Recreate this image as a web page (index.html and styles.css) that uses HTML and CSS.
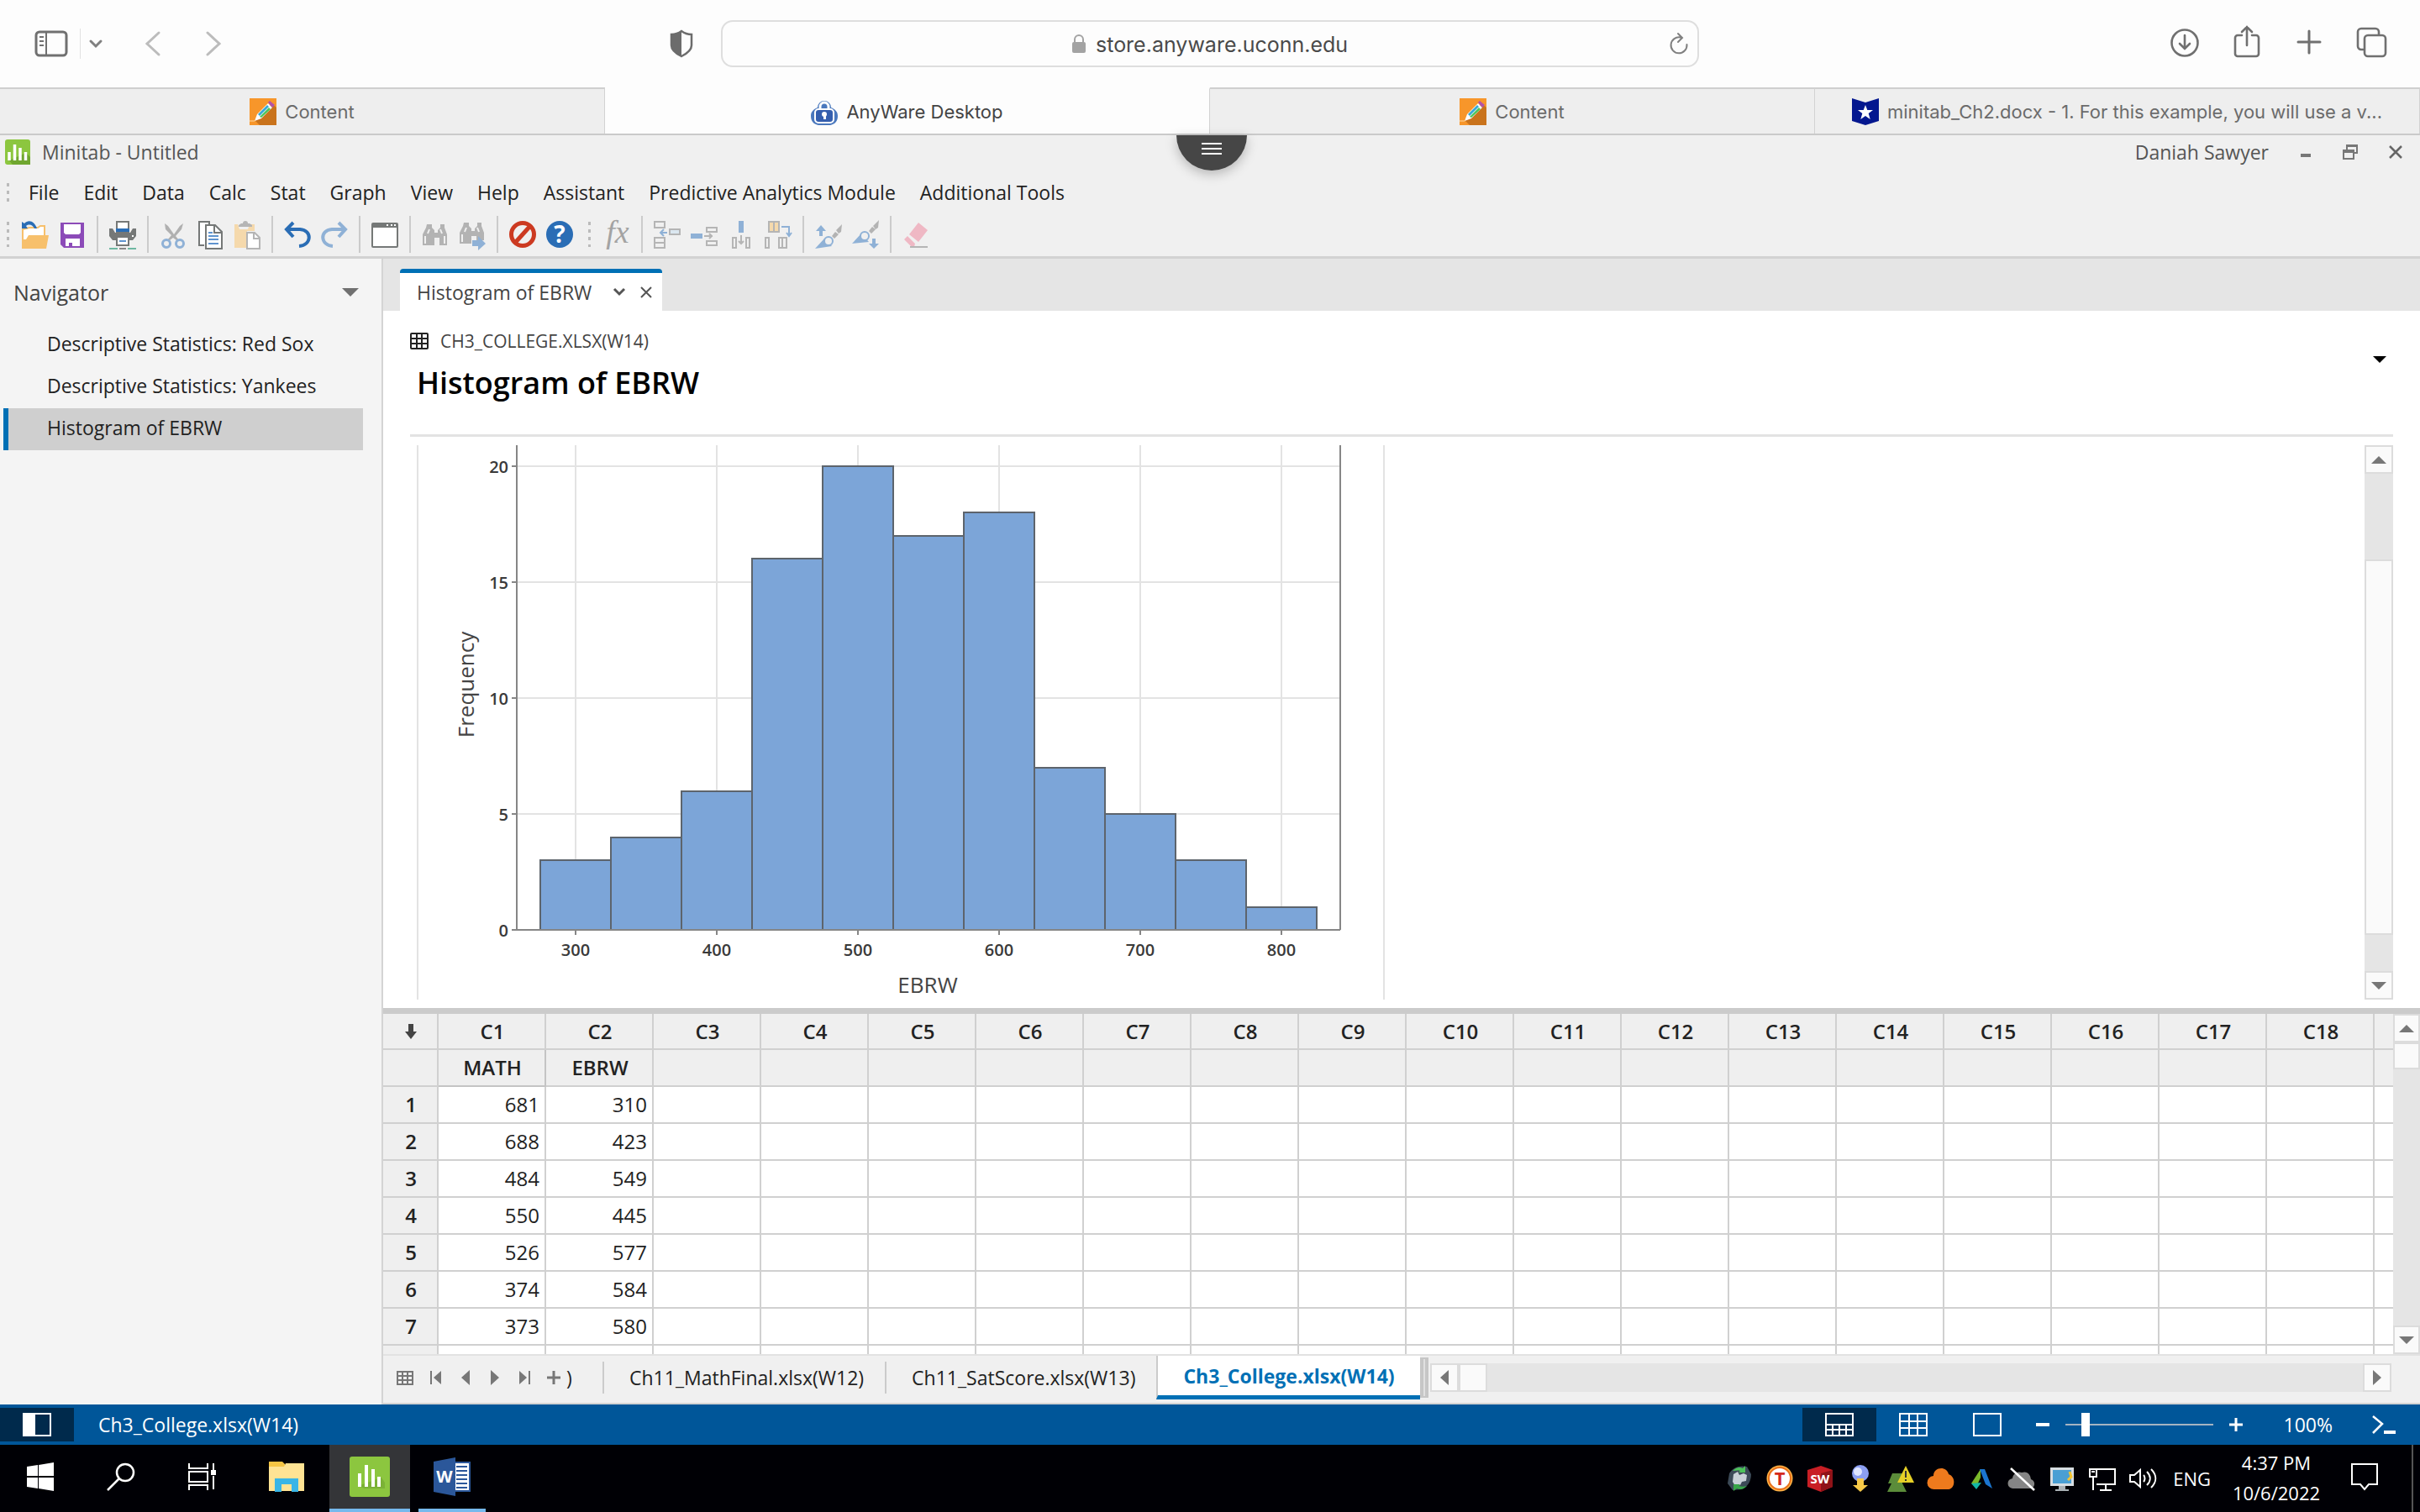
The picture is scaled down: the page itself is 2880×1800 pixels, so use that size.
FILE: index.html
```html
<!DOCTYPE html>
<html lang="en">
<head>
  <meta charset="UTF-8" />
  <meta name="viewport" content="width=device-width, initial-scale=1" />
  <title>AnyWare Desktop</title>
  <link rel="stylesheet" href="styles.css">
</head>
<body>

<!-- Browser toolbar -->
<header class="browser-bar">
  <div class="browser-left">
    <button class="sidebar-btn" aria-label="Show sidebar">
      <svg width="40" height="32" viewBox="0 0 40 32" fill="none" stroke="#707070" stroke-width="3"><rect x="2" y="2" width="36" height="28" rx="4"/><path d="M14 2v28M6 8h5M6 13h5M6 18h5" stroke-width="2"/></svg>
    </button>
    <button class="chevron-btn" aria-label="Tab groups">
      <svg width="16" height="10" viewBox="0 0 16 10" fill="none" stroke="#808080" stroke-width="3" stroke-linecap="round"><path d="M2 2l6 6 6-6"/></svg>
    </button>
    <button class="history-btn" aria-label="Back">
      <svg width="20" height="30" viewBox="0 0 20 30" fill="none" stroke="#bcbcbc" stroke-width="3" stroke-linecap="round"><path d="M17 2L3 15l14 13"/></svg>
    </button>
    <button class="history-btn" aria-label="Forward">
      <svg width="20" height="30" viewBox="0 0 20 30" fill="none" stroke="#bcbcbc" stroke-width="3" stroke-linecap="round"><path d="M3 2l14 13L3 28"/></svg>
    </button>
    <button class="shield-btn" aria-label="Privacy report">
      <svg width="28" height="34" viewBox="0 0 28 34"><path d="M14 2C10 5 6 6 2 6v13c0 6 6 10 12 13 6-3 12-7 12-13V6c-4 0-8-1-12-4z" fill="#fdfdfd" stroke="#6c6c6c" stroke-width="2.5"/><path d="M14 2C10 5 6 6 2 6v13c0 6 6 10 12 13z" fill="#6c6c6c"/></svg>
    </button>
  </div>
  <form class="address">
    <svg width="18" height="24" viewBox="0 0 18 24"><rect x="1" y="10" width="16" height="13" rx="2" fill="#a3a3a3"/><path d="M4 11V7a5 5 0 0 1 10 0v4" fill="none" stroke="#a3a3a3" stroke-width="2"/></svg>
    <input type="text" aria-label="Address" value="store.anyware.uconn.edu">
    <button type="button" class="reload" aria-label="Reload">
      <svg width="24" height="28" viewBox="0 0 24 28" fill="none" stroke="#808080" stroke-width="2" stroke-linecap="round"><path d="M14 6.500A9.500 9.500 0 1 0 21.500 15M11 2l5 5-5 5"/></svg>
    </button>
  </form>
  <div class="browser-right">
    <button aria-label="Downloads">
      <svg width="36" height="40" viewBox="0 0 36 40" fill="none" stroke="#707070" stroke-width="2.600"><circle cx="18" cy="22" r="15.500"/><path d="M18 13v16M12 23l6 6 6-6" stroke-linecap="round"/></svg>
    </button>
    <button aria-label="Share">
      <svg width="36" height="40" viewBox="0 0 36 40" fill="none" stroke="#707070" stroke-width="2.600" stroke-linecap="round"><path d="M12 13H7a3 3 0 0 0-3 3v19a3 3 0 0 0 3 3h22a3 3 0 0 0 3-3V16a3 3 0 0 0-3-3h-5M18 25V3M12 9l6-6 6 6"/></svg>
    </button>
    <button aria-label="New tab">
      <svg width="36" height="40" viewBox="0 0 36 40" fill="none" stroke="#707070" stroke-width="3" stroke-linecap="round"><path d="M18 8v26M5 21h26"/></svg>
    </button>
    <button aria-label="Tab overview">
      <svg width="36" height="40" viewBox="0 0 36 40" fill="none" stroke="#707070" stroke-width="2.600"><rect x="10" y="13" width="25" height="25" rx="4"/><path d="M10 30H6a4 4 0 0 1-4-4V9a4 4 0 0 1 4-4h17a4 4 0 0 1 4 4v4"/></svg>
    </button>
  </div>
</header>

<nav class="browser-tabs">
  <a href="#" class="browser-tab">
    <svg width="32" height="32" viewBox="0 0 32 32"><rect width="32" height="32" fill="#f7962a"/><path d="M26 6l6 5v21H12l-6-6z" fill="#c9731c"/><path d="M6 27l3-8L22 6l5 5-13 13z" fill="#fff"/><path d="M10 19L21 8l2 2-11 11z" fill="#37a9d6"/><path d="M12 22l11-11 2 2-11 10z" fill="#4cc35a"/><path d="M22 5l2-2 6 5-3 3z" fill="#b254a8"/><path d="M0 27h6" stroke="#ffd9a0"/></svg>
    Content
  </a>
  <a href="#" class="browser-tab current">
    <svg width="32" height="32" viewBox="0 0 32 32"><path d="M8 11a8 8 0 0 1 16 0c5 2 8 5 8 10 0 7-4 10-9 11H9c-5-1-9-4-9-11 0-5 3-8 8-10z" fill="#4a78bd"/><path d="M11 13v-3a5 5 0 0 1 10 0v3" fill="none" stroke="#fff" stroke-width="3"/><rect x="5" y="13" width="22" height="16" rx="4" fill="#355fae" stroke="#fff" stroke-width="2"/><circle cx="16" cy="19" r="3" fill="#fff"/><path d="M15 20h3v5h-3z" fill="#fff"/></svg>
    AnyWare Desktop
  </a>
  <a href="#" class="browser-tab">
    <svg width="32" height="32" viewBox="0 0 32 32"><rect width="32" height="32" fill="#f7962a"/><path d="M26 6l6 5v21H12l-6-6z" fill="#c9731c"/><path d="M6 27l3-8L22 6l5 5-13 13z" fill="#fff"/><path d="M10 19L21 8l2 2-11 11z" fill="#37a9d6"/><path d="M12 22l11-11 2 2-11 10z" fill="#4cc35a"/><path d="M22 5l2-2 6 5-3 3z" fill="#b254a8"/><path d="M0 27h6" stroke="#ffd9a0"/></svg>
    Content
  </a>
  <a href="#" class="browser-tab">
    <svg width="32" height="32" viewBox="0 0 32 32"><path d="M0 0l16 5L32 0v27l-16 5-16-5z" fill="#04178f"/><path d="M16 8l2.300 6H25l-5.300 4 2 7-5.700-4-5.700 4 2-7L7 14h6.700z" fill="#fff"/></svg>
    minitab_Ch2.docx - 1. For this example, you will use a v...
  </a>
</nav>

<!-- Remote desktop -->
<div class="desktop">
  <button class="remote-menu" aria-label="Session menu">
    <svg width="24" height="16" viewBox="0 0 24 16" stroke="#fff" stroke-width="2"><path d="M0 2h24M0 8h24M0 14h24"/></svg>
  </button>

  <div class="title-bar">
    <svg width="30" height="30" viewBox="0 0 30 30"><rect width="30" height="30" rx="3" fill="#8cc63f"/><path d="M25 16l5 5v9H9l-4-5z" fill="#6fa62f"/><path d="M5 15v10M11.500 6v19M18 10v15M24.500 15v10" stroke="#fff" stroke-width="3.500"/></svg>
    <span class="title-text">Minitab - Untitled</span>
    <span class="user-name">Daniah Sawyer</span>
    <button aria-label="Minimize"><svg width="16" height="20" viewBox="0 0 16 20"><path d="M2 14h12" stroke="#777" stroke-width="4"/></svg></button>
    <button aria-label="Restore"><svg width="18" height="20" viewBox="0 0 18 20" fill="none" stroke="#777" stroke-width="2"><path d="M5 7V2h12v9h-4M5 3h12"/><path d="M1 8h12v10H1zM1 10h12"/></svg></button>
    <button aria-label="Close"><svg width="18" height="20" viewBox="0 0 18 20" fill="none" stroke="#666" stroke-width="2.500"><path d="M2 3l14 14M16 3L2 17"/></svg></button>
  </div>

  <nav class="menu-bar">
    <i class="grip"></i>
    <button>File</button>
    <button>Edit</button>
    <button>Data</button>
    <button>Calc</button>
    <button>Stat</button>
    <button>Graph</button>
    <button>View</button>
    <button>Help</button>
    <button>Assistant</button>
    <button>Predictive Analytics Module</button>
    <button>Additional Tools</button>
  </nav>

  <div class="tool-bar">
    <i class="grip"></i>
    <button aria-label="Open"><svg viewBox="0 0 32 32"><path d="M1 31V10l8-2h10l3-2h5v11" fill="#fff" stroke="#f7c06c" stroke-width="2"/><path d="M8 17h24l-3 16H0V22h5z" fill="#f7c06c"/><path d="M0 1v8h7l-2-3c4-3 8-1 10 3h3C15 0 8-2 3 3z" fill="#2a6db5"/></svg></button>
    <button aria-label="Save"><svg viewBox="0 0 32 32"><path d="M2 2h28v30H6l-4-4z" fill="#8c4bb8"/><path d="M6 4h20v10l-2 2H8l-2-2z" fill="#fff"/><path d="M8 21h17v9h-9v-4h-4v4H8z" fill="#fff"/></svg></button>
    <i class="sep"></i>
    <button aria-label="Print"><svg viewBox="0 0 32 32"><path d="M0 9h4l3 5h18l3-5h4v9l-4 5H4l-4-5z" fill="#757877"/><path d="M9 1h14v12H9z" fill="#fff" stroke="#757877" stroke-width="2"/><path d="M8 9h16v4H8z" fill="#2a6db5"/><path d="M9 19h14v10H9z" fill="#fff" stroke="#757877" stroke-width="2"/><path d="M12 24h8" stroke="#5f94cf" stroke-width="2"/><path d="M0 33h10M22 33h10" stroke="#6fb8a2" stroke-width="2"/><path d="M12 33h8" stroke="#888" stroke-width="2"/><rect x="27" y="17" width="2" height="2" fill="#fff"/></svg></button>
    <i class="sep"></i>
    <button aria-label="Cut"><svg viewBox="0 0 32 32"><path d="M6 3l4 3 7 10 7-10 4-3-2 7-7 8 4 5h-3l-4-3-4 3H9l5-6-7-7z" fill="#b0b0b0"/><circle cx="8" cy="27" r="4.500" fill="none" stroke="#8fb1d6" stroke-width="3"/><circle cx="24" cy="27" r="4.500" fill="none" stroke="#8fb1d6" stroke-width="3"/></svg></button>
    <button aria-label="Copy"><svg viewBox="0 0 32 32"><path d="M9 29H3V1h12v3" fill="#fff" stroke="#757877" stroke-width="2"/><path d="M11 5h11l8 8v20H11z" fill="#fff" stroke="#757877" stroke-width="2"/><path d="M21 5v9h9" fill="none" stroke="#757877" stroke-width="2"/><path d="M14 14h5M14 18h12M14 22h12M14 27h12" stroke="#5f94cf" stroke-width="2"/></svg></button>
    <button aria-label="Paste"><svg viewBox="0 0 32 32"><path d="M1 4h4l2 6h10l2-6h6v8h-9v20H1z" fill="#f5d9ac"/><path d="M6 7V5l3-2h2a3 3 0 0 1 6 0h2l3 2v2z" fill="#b5b5b5"/><path d="M16 14h9l6 6v13H16z" fill="#fff" stroke="#b5b5b5" stroke-width="2"/><path d="M24 14v7h7" fill="none" stroke="#b5b5b5" stroke-width="2"/></svg></button>
    <i class="sep"></i>
    <button aria-label="Undo"><svg viewBox="0 0 32 32" fill="none" stroke="#2a6db5" stroke-width="4"><path d="M3 10h16c15 1 14 19-1 20M11 2L3 10l8 9"/></svg></button>
    <button aria-label="Redo"><svg viewBox="0 0 32 32" fill="none" stroke="#8fb1d6" stroke-width="4"><path d="M29 10H13c-15 1-14 19 1 20M21 2l8 8-8 9"/></svg></button>
    <i class="sep"></i>
    <button aria-label="Project window"><svg viewBox="0 0 32 32"><rect x="1" y="3" width="30" height="28" rx="1" fill="#fff" stroke="#757877" stroke-width="2"/><path d="M1 3h30v5H1z" fill="#757877"/><path d="M18 5h2M23 5h2M27 5h2" stroke="#fff" stroke-width="2"/></svg></button>
    <i class="sep"></i>
    <button aria-label="Find"><svg viewBox="0 0 32 32"><path d="M6 4h6v4l3 3v3h4v-3l3-3V4h5v4l3 8v13h-9v-9h-6v9H1V16l4-8z" fill="#b3b3b3"/><path d="M4 18v9M27 18v9M9 10l-2 5M22 10l2 5" stroke="#f0f0f0" stroke-width="2"/></svg></button>
    <button aria-label="Find next"><svg viewBox="0 0 32 32"><path d="M6 2h6v4l3 3v3h4V9l3-3V2h5v4l3 8v9h-9v-5h-6v9H1V14l4-8z" fill="#b3b3b3"/><path d="M4 16v9M9 8l-2 5M22 8l2 5" stroke="#f0f0f0" stroke-width="2"/><path d="M16 23h7v-5l9 9-9 8v-5h-7z" fill="#8fb1d6"/></svg></button>
    <i class="sep"></i>
    <button aria-label="Cancel"><svg viewBox="0 0 32 32" fill="none" stroke="#cc3a21" stroke-width="5"><circle cx="16" cy="16" r="13.500"/><path d="M7 26L25 6"/></svg></button>
    <button aria-label="Help"><svg viewBox="0 0 32 32"><circle cx="16" cy="16" r="16" fill="#2a6db5"/><text class="help-mark" x="16" y="26" text-anchor="middle">?</text></svg></button>
    <i class="grip wide"></i>
    <button aria-label="Formula"><svg viewBox="0 0 32 32"><text class="fx" x="17" y="26" text-anchor="middle">fx</text></svg></button>
    <i class="sep"></i>
    <button aria-label="Insert rows"><svg viewBox="0 0 32 32" fill="none" stroke="#b5b5b5" stroke-width="2"><path d="M1 1h12v7H1zM1 20h12v12H1zM1 26h12"/><rect x="19" y="10" width="12" height="6" fill="#dbe7f0"/><path d="M8 14h8M12 10l-4 4 4 4" stroke="#8fb1d6"/></svg></button>
    <button aria-label="Insert cells"><svg viewBox="0 0 32 32" fill="none" stroke="#b5b5b5" stroke-width="2"><path d="M19 8h12v5H19zM19 24h12v5H19zM16 18h10M22 15l3 3-3 3"/><path d="M0 15h14v6H0z" fill="#8fb1d6" stroke="none"/></svg></button>
    <button aria-label="Insert columns"><svg viewBox="0 0 32 32" fill="none" stroke="#b5b5b5" stroke-width="2"><path d="M6 20h4v12H6zM22 20h4v12h-4zM16 17v10M13 24l3 3 3-3"/><path d="M13 0h6v14h-6z" fill="#8fb1d6" stroke="none"/></svg></button>
    <button aria-label="Move columns"><svg viewBox="0 0 32 32" fill="none" stroke="#b5b5b5" stroke-width="2"><path d="M5 1h12v12H5z" fill="#f5d9ac"/><path d="M11 1v12M1 20h4v12H1zM17 20h9v12h-9zM21 20v12"/><path d="M20 7h9v10M26 14l3 4 3-4" stroke="#8fb1d6"/></svg></button>
    <i class="sep"></i>
    <button aria-label="Previous brushed point"><svg viewBox="0 0 32 32"><path d="M7 5l6 7H9v6H5v-6H1zM0 33l11-12 9 9z" fill="#8fb1d6"/><circle cx="16" cy="24" r="5" fill="#f0f0f0" stroke="#8fb1d6" stroke-width="2"/><path d="M20 18l4-5 4 3-5 5zM25 11l7-7-1 9-3 2z" fill="#b3b3b3"/></svg></button>
    <button aria-label="Next brushed point"><svg viewBox="0 0 32 32"><path d="M26 33l-6-6h4v-6h4v6h4zM0 27l11-12 9 10z" fill="#8fb1d6"/><circle cx="15" cy="18" r="5" fill="#f0f0f0" stroke="#8fb1d6" stroke-width="2"/><path d="M20 12l4-5 4 3-5 5zM25 6l7-7-1 9-3 2z" fill="#b3b3b3"/></svg></button>
    <i class="sep"></i>
    <button aria-label="Clear"><svg viewBox="0 0 32 32"><path d="M19 2l11 9-11 14-11-9zM6 18l9 9-1 4H11l-9-9z" fill="#efb8c4"/><path d="M9 31h21" stroke="#b5b5b5" stroke-width="2"/></svg></button>
  </div>

  <div class="workspace">
    <aside class="navigator">
      <h2>Navigator
        <svg width="20" height="10" viewBox="0 0 20 10"><path d="M0 0h20L10 10z" fill="#707070"/></svg>
      </h2>
      <ul>
        <li><a href="#">Descriptive Statistics: Red Sox</a></li>
        <li><a href="#">Descriptive Statistics: Yankees</a></li>
        <li><a href="#" class="selected">Histogram of EBRW</a></li>
      </ul>
    </aside>

    <main class="main">
      <div class="output-tabs">
        <div class="output-tab">
          <span>Histogram of EBRW</span>
          <button aria-label="Tab menu"><svg width="14" height="10" viewBox="0 0 14 10" fill="none" stroke="#555" stroke-width="3"><path d="M1 1l6 6 6-6"/></svg></button>
          <button aria-label="Close tab"><svg width="14" height="14" viewBox="0 0 14 14" fill="none" stroke="#555" stroke-width="2"><path d="M1 1l12 12M13 1L1 13"/></svg></button>
        </div>
      </div>

      <section class="output">
        <div class="output-head">
          <div>
            <p class="source">
              <svg width="22" height="20" viewBox="0 0 22 20" fill="none" stroke="#222" stroke-width="2"><rect x="1" y="1" width="20" height="18" rx="1"/><path d="M1 7h20M1 13h20M8 1v18M14 1v18"/></svg>
              CH3_COLLEGE.XLSX(W14)
            </p>
            <h1>Histogram of EBRW</h1>
          </div>
          <button class="output-menu" aria-label="Output options"><svg width="16" height="8" viewBox="0 0 16 8"><path d="M0 0h16L8 8z"/></svg></button>
        </div>

        <div class="output-body">
          <svg class="chart" width="1152" height="660" viewBox="-1 0 1152 660">
            <path class="frame" d="M0 0v660M1150 0v660"/>
            <path class="grid" d="M188 0v577M356 0v577M524 0v577M692 0v577M860 0v577M1028 0v577M118 25h980M118 163h980M118 301h980M118 439h980"/>
            <g class="bars">
              <rect x="146" y="494" width="84" height="83"/>
              <rect x="230" y="467" width="84" height="110"/>
              <rect x="314" y="412" width="84" height="165"/>
              <rect x="398" y="135" width="84" height="442"/>
              <rect x="482" y="25" width="84" height="552"/>
              <rect x="566" y="108" width="84" height="469"/>
              <rect x="650" y="80" width="84" height="497"/>
              <rect x="734" y="384" width="84" height="193"/>
              <rect x="818" y="439" width="84" height="138"/>
              <rect x="902" y="494" width="84" height="83"/>
              <rect x="986" y="550" width="84" height="27"/>
            </g>
            <path class="axis" d="M118 0v577M1098 0v577M112 577h986M112 25h6M112 163h6M112 301h6M112 439h6M188 577v6M356 577v6M524 577v6M692 577v6M860 577v6M1028 577v6"/>
            <g class="ticks" text-anchor="end">
              <text x="108" y="33">20</text>
              <text x="108" y="171">15</text>
              <text x="108" y="309">10</text>
              <text x="108" y="447">5</text>
              <text x="108" y="585">0</text>
            </g>
            <g class="ticks" text-anchor="middle">
              <text x="188" y="608">300</text>
              <text x="356" y="608">400</text>
              <text x="524" y="608">500</text>
              <text x="692" y="608">600</text>
              <text x="860" y="608">700</text>
              <text x="1028" y="608">800</text>
            </g>
            <text class="axis-title" x="607" y="652" text-anchor="middle">EBRW</text>
            <text class="axis-title" transform="translate(67 285) rotate(-90)" text-anchor="middle">Frequency</text>
          </svg>
          <div class="scroll-v">
            <button aria-label="Scroll up"><svg width="18" height="9" viewBox="0 0 18 9"><path d="M0 9h18L9 0z"/></svg></button>
            <i class="thumb"></i>
            <button aria-label="Scroll down"><svg width="18" height="9" viewBox="0 0 18 9"><path d="M0 0h18L9 9z"/></svg></button>
          </div>
        </div>
      </section>

      <section class="worksheet">
        <div class="sheet-view">
          <table>
            <thead>
              <tr class="cols"><th class="corner"><svg width="16" height="18" viewBox="0 0 16 18"><path d="M5 0h6v9h4l-7 9-7-9h4z" fill="#444"/></svg></th><th>C1</th><th>C2</th><th>C3</th><th>C4</th><th>C5</th><th>C6</th><th>C7</th><th>C8</th><th>C9</th><th>C10</th><th>C11</th><th>C12</th><th>C13</th><th>C14</th><th>C15</th><th>C16</th><th>C17</th><th>C18</th><th></th></tr>
              <tr><th></th><th class="active">MATH</th><th>EBRW</th><th></th><th></th><th></th><th></th><th></th><th></th><th></th><th></th><th></th><th></th><th></th><th></th><th></th><th></th><th></th><th></th><th></th></tr>
            </thead>
            <tbody>
              <tr><th>1</th><td>681</td><td>310</td><td></td><td></td><td></td><td></td><td></td><td></td><td></td><td></td><td></td><td></td><td></td><td></td><td></td><td></td><td></td><td></td><td></td></tr>
              <tr><th>2</th><td>688</td><td>423</td><td></td><td></td><td></td><td></td><td></td><td></td><td></td><td></td><td></td><td></td><td></td><td></td><td></td><td></td><td></td><td></td><td></td></tr>
              <tr><th>3</th><td>484</td><td>549</td><td></td><td></td><td></td><td></td><td></td><td></td><td></td><td></td><td></td><td></td><td></td><td></td><td></td><td></td><td></td><td></td><td></td></tr>
              <tr><th>4</th><td>550</td><td>445</td><td></td><td></td><td></td><td></td><td></td><td></td><td></td><td></td><td></td><td></td><td></td><td></td><td></td><td></td><td></td><td></td><td></td></tr>
              <tr><th>5</th><td>526</td><td>577</td><td></td><td></td><td></td><td></td><td></td><td></td><td></td><td></td><td></td><td></td><td></td><td></td><td></td><td></td><td></td><td></td><td></td></tr>
              <tr><th>6</th><td>374</td><td>584</td><td></td><td></td><td></td><td></td><td></td><td></td><td></td><td></td><td></td><td></td><td></td><td></td><td></td><td></td><td></td><td></td><td></td></tr>
              <tr><th>7</th><td>373</td><td>580</td><td></td><td></td><td></td><td></td><td></td><td></td><td></td><td></td><td></td><td></td><td></td><td></td><td></td><td></td><td></td><td></td><td></td></tr>
              <tr><th></th><td></td><td></td><td></td><td></td><td></td><td></td><td></td><td></td><td></td><td></td><td></td><td></td><td></td><td></td><td></td><td></td><td></td><td></td><td></td></tr>
            </tbody>
          </table>
        </div>
        <div class="scroll-v sheet-scroll">
          <button aria-label="Scroll up"><svg width="18" height="9" viewBox="0 0 18 9"><path d="M0 9h18L9 0z"/></svg></button>
          <i class="thumb"></i>
          <button aria-label="Scroll down"><svg width="18" height="9" viewBox="0 0 18 9"><path d="M0 0h18L9 9z"/></svg></button>
        </div>
      </section>

      <div class="sheet-bar">
        <div class="sheet-nav">
          <button aria-label="Worksheet list"><svg width="20" height="18" viewBox="0 0 20 18" fill="none" stroke="#777" stroke-width="2"><path d="M1 2h18v15H1zM1 7h18M1 12h18M7 2v15M13 2v15"/></svg></button>
          <button aria-label="First worksheet"><svg width="16" height="18" viewBox="0 0 16 18" fill="#777"><path d="M1 1h2v16H1zM14 1v16L5 9z"/></svg></button>
          <button aria-label="Previous worksheet"><svg width="16" height="18" viewBox="0 0 16 18" fill="#777"><path d="M13 0v18L3 9z"/></svg></button>
          <button aria-label="Next worksheet"><svg width="16" height="18" viewBox="0 0 16 18" fill="#777"><path d="M3 0v18l10-9z"/></svg></button>
          <button aria-label="Last worksheet"><svg width="16" height="18" viewBox="0 0 16 18" fill="#777"><path d="M13 1h2v16h-2zM2 1v16l9-8z"/></svg></button>
          <button aria-label="Add worksheet"><svg width="16" height="18" viewBox="0 0 16 18" stroke="#777" stroke-width="3"><path d="M8 1v16M0 9h16"/></svg></button>
          <span>)</span>
        </div>
        <button class="sheet-tab">Ch11_MathFinal.xlsx(W12)</button>
        <button class="sheet-tab">Ch11_SatScore.xlsx(W13)</button>
        <button class="sheet-tab active">Ch3_College.xlsx(W14)</button>
        <i class="split-handle"></i>
        <div class="scroll-h">
          <button aria-label="Scroll left"><svg width="10" height="18" viewBox="0 0 10 18"><path d="M10 0v18L0 9z"/></svg></button>
          <i class="thumb"></i>
          <button aria-label="Scroll right"><svg width="10" height="18" viewBox="0 0 10 18"><path d="M0 0v18l10-9z"/></svg></button>
        </div>
      </div>
    </main>
  </div>

  <footer class="status-bar">
    <button class="on" aria-label="Navigator"><svg width="34" height="28" viewBox="0 0 34 28"><rect x="1" y="1" width="32" height="26" fill="none" stroke="#fff" stroke-width="2"/><path d="M1 1h14v26H1z" fill="#fff"/></svg></button>
    <span class="status-file">Ch3_College.xlsx(W14)</span>
    <button class="on" aria-label="Split view"><svg width="34" height="28" viewBox="0 0 34 28" fill="none" stroke="#fff" stroke-width="2"><path d="M1 1h32v26H1zM1 14h32M1 20h32M9 14v13M17 14v13M25 14v13"/></svg></button>
    <button aria-label="Data view"><svg width="34" height="28" viewBox="0 0 34 28" fill="none" stroke="#fff" stroke-width="2"><path d="M1 1h32v26H1zM1 10h32M1 18h32M12 1v26M22 1v26"/></svg></button>
    <button aria-label="Output view"><svg width="34" height="28" viewBox="0 0 34 28" fill="none" stroke="#fff" stroke-width="2"><path d="M1 1h32v26H1z"/></svg></button>
    <div class="zoom">
      <button aria-label="Zoom out"><svg width="18" height="18" viewBox="0 0 18 18"><path d="M1 9h16" stroke="#fff" stroke-width="4"/></svg></button>
      <input type="range" aria-label="Zoom" min="0" max="100" value="12">
      <button aria-label="Zoom in"><svg width="18" height="18" viewBox="0 0 18 18"><path d="M1 9h16M9 1v16" stroke="#fff" stroke-width="3"/></svg></button>
    </div>
    <span class="zoom-value">100%</span>
    <button class="command" aria-label="Command line"><svg width="30" height="26" viewBox="0 0 30 26" fill="none" stroke="#fff"><path d="M2 3l11 9L2 23" stroke-width="2.500"/><path d="M15 22h14" stroke-width="4"/></svg></button>
  </footer>

  <div class="taskbar">
    <button aria-label="Start"><svg width="34" height="34" viewBox="0 0 34 34" fill="#fff"><path d="M1 5l13-2v13H1zM15 3l18-3v16H15zM1 18h13v13L1 29zM15 18h18v16l-18-3z"/></svg></button>
    <button aria-label="Search"><svg width="34" height="34" viewBox="0 0 34 34" fill="none" stroke="#fff" stroke-width="2.500"><circle cx="22" cy="12" r="10"/><path d="M15 19L1 33"/></svg></button>
    <button aria-label="Task view"><svg width="34" height="34" viewBox="0 0 34 34" fill="none" stroke="#fff" stroke-width="2"><path d="M2 1v6h22V1M2 11h22v12H2zM2 33v-6h22v6M31 1v8M31 16v16"/><rect x="28" y="9" width="6" height="6" fill="#fff" stroke="none"/></svg></button>
    <button class="explorer" aria-label="File Explorer"><svg width="44" height="38" viewBox="0 0 44 38"><path d="M1 1h16l3 3v4H1z" fill="#f6c544"/><path d="M1 7h18l2-4h22v33H1z" fill="#ffe394"/><path d="M8 37V21h28v16h-8v-9H16v9z" fill="#39b5e6"/></svg></button>
    <button class="running focused" aria-label="Minitab"><svg width="48" height="48" viewBox="0 0 48 48"><rect width="48" height="48" rx="3" fill="#8cc63f"/><path d="M38 25l4 6v7H18l-8-3z" fill="#7bb236"/><path d="M12 20v16M20 10v26M28 15v21M35 24v12" stroke="#fff" stroke-width="4"/></svg></button>
    <button class="running" aria-label="Word"><svg width="44" height="46" viewBox="0 0 44 46"><rect x="24" y="6" width="19" height="34" fill="#fff" stroke="#2b579a" stroke-width="2"/><path d="M27 11h13M27 16h13M27 21h13M27 26h13M27 31h13M27 36h13" stroke="#2b579a" stroke-width="2"/><path d="M0 5l26-5v46L0 41z" fill="#2b579a"/><text class="word-mark" x="13" y="30" text-anchor="middle">W</text></svg></button>

    <div class="tray">
      <button aria-label="Sync"><svg viewBox="0 0 32 32"><path d="M4 10C8 3 16 0 25 2l5 9c0 8-4 15-11 18l-11 1-6-8z" fill="#3c4a58"/><path d="M9 11l5-3 2 4 5-2 4 2-1 7-5 1-2 4-6 1-3-5z" fill="#c9d1d8"/><path d="M8 7c4-4 8-5 12-3l3-3v8h-8l2-2c-3-1-6 0-9 0z" fill="#4cc35a"/><path d="M25 25c-4 4-8 5-12 3l-4 3v-8h8l-2 2c4 1 7 1 10 0z" fill="#37a648"/></svg></button>
      <button aria-label="T"><svg viewBox="0 0 32 32"><circle cx="16" cy="16" r="15.500" fill="#ffb347"/><circle cx="16" cy="16" r="13" fill="#fff" stroke="#e8711a" stroke-width="2"/><text class="t-mark" x="16" y="24" text-anchor="middle">T</text></svg></button>
      <button aria-label="SolidWorks"><svg viewBox="0 0 32 32"><path d="M1 6l16-5 14 5v20l-14 6L1 26z" fill="#c81e25"/><path d="M17 10l14-4v20l-14 6z" fill="#8f1218"/><text class="sw-mark" x="16" y="22" text-anchor="middle">SW</text></svg></button>
      <button aria-label="Notifier"><svg viewBox="0 0 32 32"><circle cx="16" cy="10" r="10" fill="#8c9ff2"/><circle cx="13" cy="8" r="5" fill="#dfe6ff"/><path d="M12 16h8v8h5l-9 8-9-8h5z" fill="#f7c948"/></svg></button>
      <button aria-label="Warning"><svg viewBox="0 0 32 32"><path d="M6 10h12v12l5 10H0l5-10H1z" fill="#5b8c3a"/><path d="M22 1l10 20H12z" fill="#e6d027"/><path d="M22 7v8M22 17v2" stroke="#333" stroke-width="2"/></svg></button>
      <button aria-label="Cloud storage"><svg viewBox="0 0 32 32"><path d="M8 29a8 8 0 0 1-1-16c0-11 16-12 18-2 9 3 8 17 0 18z" fill="#ee7a1d"/></svg></button>
      <button aria-label="Autodesk"><svg viewBox="0 0 32 32"><path d="M15 5L4 22l7 2 4-9z" fill="#7ab82b"/><path d="M14 5h6l9 23-8-5z" fill="#1b75d0"/><path d="M4 22l12-1-6 8z" fill="#14b8a6"/></svg></button>
      <button aria-label="OneDrive"><svg viewBox="0 0 32 32"><path d="M6 28a6 6 0 0 1-1-12 8 8 0 0 1 11-7c7-2 10 2 11 8 6 2 5 10 0 11z" fill="#858585"/><path d="M3 4l28 26" stroke="#fff" stroke-width="2.500"/></svg></button>
      <button aria-label="Display"><svg viewBox="0 0 32 32"><rect x="2" y="3" width="28" height="22" fill="#d7dde2"/><rect x="5" y="6" width="22" height="16" fill="#4a9fd4"/><path d="M12 25h8v4h4v2H8v-2h4z" fill="#a9b0b5"/><path d="M25 8l2 6-4 4" stroke="#f4c430" stroke-width="3" fill="none"/></svg></button>
      <button aria-label="Network"><svg viewBox="0 0 32 32" fill="none" stroke="#fff" stroke-width="2"><path d="M10 5h21v18H9M20 23v6M13 30h14M1 5h8v9H1zM5 14v16M3 8h4"/></svg></button>
      <button aria-label="Volume"><svg viewBox="0 0 32 32" fill="none" stroke="#fff" stroke-width="2"><path d="M1 12h5l7-6v20l-7-6H1zM17 12c2 2 2 6 0 8M21 8c5 5 5 11 0 16M26 5c7 7 7 15 0 22"/></svg></button>
    </div>
    <span class="lang">ENG</span>
    <p class="clock">4:37 PM<br>10/6/2022</p>
    <button class="notify" aria-label="Notifications"><svg width="34" height="34" viewBox="0 0 34 34" fill="none" stroke="#fff" stroke-width="2"><path d="M2 2h30v24H22l-5 6-5-6H2z"/></svg></button>
    <i class="show-desktop"></i>
  </div>
</div>

</body>
</html>
```
FILE: styles.css
```css
* {
  box-sizing: border-box;
}
body {
  margin: 0;
  min-height: 100vh;
  display: flex;
  flex-direction: column;
  font-family: 'Open Sans', 'Noto Sans', sans-serif;
  font-size: 23px;
  line-height: 28px;
  color: #222;
  background: #f0f0f0;
}
button {
  border: 0;
  padding: 0;
  margin: 0;
  background: none;
  font: inherit;
  color: inherit;
  display: flex;
  align-items: center;
  justify-content: center;
}
a {
  color: inherit;
  text-decoration: none;
}
svg {
  display: block;
  flex: none;
  overflow: visible;
}
h1, h2, p, ul {
  margin: 0;
  padding: 0;
}
ul {
  list-style: none;
}

/* browser */
.browser-bar {
  display: grid;
  grid-template-columns: 1fr 1164px 1fr;
  align-items: center;
  height: 104px;
  background: #fdfdfd;
}
.browser-left {
  display: flex;
  align-items: center;
  height: 36px;
  padding: 0 33px 0 41px;
}
.sidebar-btn {
  height: 36px;
  padding-right: 14px;
  border-right: 1px solid #e2e2e2;
}
.chevron-btn {
  margin: 0 50px 0 10px;
}
.history-btn {
  margin-right: 52px;
}
.shield-btn {
  margin-left: auto;
}
.address {
  display: flex;
  align-items: center;
  justify-content: center;
  gap: 11px;
  height: 56px;
  padding: 0 10px 0 415px;
  border: 2px solid #dedede;
  border-radius: 14px;
}
.address input {
  width: 320px;
  padding: 2px 0 0;
  border: 0;
  outline: 0;
  background: none;
  font: 25px Inter, sans-serif;
  color: #4a4a4a;
}
.reload {
  margin-left: auto;
}
.browser-right {
  display: flex;
  justify-content: flex-end;
  gap: 38px;
  padding: 0 40px 6px 0;
}
.browser-tabs {
  display: grid;
  grid-template-columns: repeat(4, 1fr);
  height: 57px;
  border-bottom: 2px solid #cacaca;
  background: #eee;
  font: 22px Inter, sans-serif;
  color: #6b6b6b;
}
.browser-tab {
  display: flex;
  align-items: center;
  justify-content: center;
  gap: 10px;
  border-top: 2px solid #cfcfcf;
  border-right: 1px solid #d2d2d2;
  white-space: nowrap;
}
.browser-tab.current {
  background: #fdfdfd;
  border-top-color: #fdfdfd;
  color: #444;
}

/* remote window */
.desktop {
  position: relative;
  flex: 1;
  display: flex;
  flex-direction: column;
}
.remote-menu {
  position: absolute;
  top: 0;
  left: 50%;
  width: 84px;
  height: 42px;
  margin-left: -40px;
  padding-bottom: 10px;
  border-radius: 0 0 42px 42px;
  background: #464646;
  box-shadow: 0 4px 14px rgba(0, 0, 0, 0.25);
}
.title-bar {
  display: flex;
  align-items: center;
  gap: 36px;
  height: 44px;
  padding: 0 20px 4px 6px;
  color: #555;
}
.title-text {
  margin-left: -22px;
  margin-right: auto;
}
.menu-bar {
  display: flex;
  align-items: center;
  gap: 29px;
  height: 48px;
}
.grip {
  width: 3px;
  height: 30px;
  margin-left: 8px;
  background: repeating-linear-gradient(#bbb 0 4px, transparent 4px 9px);
}
.menu-bar .grip {
  height: 22px;
  margin-right: -6px;
}
.tool-bar {
  display: flex;
  align-items: center;
  height: 55px;
  padding-bottom: 1px;
  border-bottom: 3px solid #d2d2d2;
}
.tool-bar button {
  width: 44px;
  height: 44px;
}
.tool-bar svg {
  width: 32px;
  height: 32px;
}
.tool-bar .grip {
  margin-right: 9px;
}
.tool-bar .grip.wide {
  margin: 0 9px 0 12px;
}
.sep {
  width: 2px;
  height: 44px;
  margin: 0 7px;
  background: #cbcbcb;
}
.help-mark {
  font: bold 28px 'Open Sans', sans-serif;
  fill: #fff;
}
.fx {
  font: italic 38px 'Liberation Serif', serif;
  fill: #a3a3a3;
}

/* navigator */
.workspace {
  flex: 1;
  display: flex;
}
.navigator {
  width: 456px;
  background: #f4f4f4;
  border-right: 2px solid #d4d4d4;
}
.navigator h2 {
  display: flex;
  align-items: center;
  justify-content: space-between;
  height: 80px;
  padding: 0 27px 0 16px;
  font-size: 25px;
  font-weight: 400;
  color: #444;
}
.navigator ul {
  padding: 0 22px 0 4px;
  margin-top: -2px;
}
.navigator li a {
  display: flex;
  align-items: center;
  height: 50px;
  padding: 0 0 4px 46px;
  border-left: 6px solid transparent;
}
.navigator li a.selected {
  background: #cfcfcf;
  border-left-color: #0070b5;
}

/* output pane */
.main {
  flex: 1;
  min-width: 0;
  display: flex;
  flex-direction: column;
}
.output-tabs {
  display: flex;
  align-items: flex-end;
  height: 62px;
  padding-left: 20px;
  background: #e5e5e5;
}
.output-tab {
  display: flex;
  align-items: center;
  gap: 18px;
  width: 312px;
  height: 50px;
  padding: 0 12px 0 20px;
  border-top: 5px solid #0070b5;
  border-radius: 4px 4px 0 0;
  background: #fff;
  color: #444;
}
.output-tab span {
  flex: 1;
  white-space: nowrap;
}
.output {
  flex: 1;
  padding: 0 32px 10px;
  background: #fff;
}
.output-head {
  display: flex;
  justify-content: space-between;
  height: 150px;
  padding-top: 22px;
  border-bottom: 3px solid #e3e3e3;
}
.source {
  display: flex;
  align-items: center;
  gap: 14px;
  font-size: 21px;
  color: #444;
}
.output-head h1 {
  margin-top: 12px;
  padding-left: 8px;
  font-size: 36px;
  line-height: 48px;
  font-weight: 600;
  color: #000;
}
.output-menu {
  align-self: flex-start;
  margin: 32px 8px 0 0;
}
.output-body {
  display: flex;
  justify-content: space-between;
  margin-top: 10px;
  padding-left: 8px;
}
.frame, .grid, .axis {
  fill: none;
  stroke: #e3e3e3;
  stroke-width: 2;
}
.axis {
  stroke: #868686;
}
.bars rect {
  fill: #7ca5d8;
  stroke: #5d646c;
  stroke-width: 2;
}
.ticks {
  font-size: 20px;
  font-weight: 600;
  fill: #3a3a3a;
}
.axis-title {
  font-size: 26px;
  font-weight: 500;
  fill: #444;
}
.scroll-v {
  display: flex;
  flex-direction: column;
  width: 34px;
  background: #e5e5e5;
  fill: #777;
}
.scroll-v button, .scroll-h button {
  width: 34px;
  height: 34px;
  flex: none;
  border: 2px solid #dcdcdc;
  background: #fafafa;
}
.scroll-v .thumb {
  height: 447px;
  margin: 102px 0 auto;
  border: 2px solid #dcdcdc;
  background: #fafafa;
}

/* worksheet */
.worksheet {
  display: flex;
  height: 412px;
  border-top: 7px solid #cbcbcb;
}
.sheet-view {
  flex: 1;
  min-width: 0;
  overflow: hidden;
  background: #fff;
}
table {
  width: 2498px;
  table-layout: fixed;
  border-collapse: separate;
  border-spacing: 0;
}
th, td {
  width: 128px;
  height: 44px;
  padding: 0 6px;
  border-right: 2px solid #d0d0d0;
  border-bottom: 2px solid #d0d0d0;
  font-size: 24px;
  text-align: right;
}
th {
  padding: 0 4px 0 6px;
  background: #efefef;
  font-weight: 600;
  text-align: center;
}
th:first-child {
  width: 66px;
}
.cols th {
  height: 43px;
}
.corner svg {
  margin: 0 auto;
}
th.active {
  border-color: #c4c4c4;
}
.sheet-scroll {
  width: 32px;
}
.sheet-scroll button {
  width: 32px;
}
.sheet-scroll .thumb {
  height: 32px;
  margin: 0 0 auto;
}
.sheet-bar {
  display: flex;
  align-items: center;
  height: 60px;
  padding: 0 34px 4px 0;
  border-top: 2px solid #e2e2e2;
  border-bottom: 2px solid #d4d4d4;
}
.sheet-nav {
  display: flex;
  align-items: center;
  gap: 19px;
  width: 261px;
  padding-left: 16px;
}
.sheet-nav span {
  margin-left: -12px;
}
.sheet-tab {
  height: 38px;
  padding: 0 25px 0 30px;
  border-left: 2px solid #cbcbcb;
}
.sheet-tab.active {
  align-self: flex-start;
  height: 52px;
  padding-right: 30px;
  border-bottom: 5px solid #0070b5;
  background: #fff;
  color: #0070b5;
  font-weight: 700;
}
.split-handle {
  width: 10px;
  height: 48px;
  margin-right: 2px;
  border: 2px solid #c6c6c6;
  border-width: 2px 4px;
  background: #e0e0e0;
}
.scroll-h {
  flex: 1;
  display: flex;
  background: #e5e5e5;
  fill: #777;
}
.scroll-h .thumb {
  width: 34px;
  margin-right: auto;
  border: 2px solid #dcdcdc;
  background: #fafafa;
}

/* status bar */
.status-bar {
  display: flex;
  align-items: center;
  height: 48px;
  padding-right: 28px;
  background: #005699;
  color: #fff;
}
.status-bar > button {
  width: 88px;
  height: 40px;
}
.status-bar > button.on {
  background: #002a4c;
}
.status-file {
  margin: 0 auto 0 29px;
}
.zoom {
  display: flex;
  align-items: center;
  gap: 18px;
  margin: 0 48px 0 13px;
}
.zoom input {
  appearance: none;
  width: 176px;
  height: 28px;
  margin: 0;
  background: linear-gradient(#a5b4c2, #a5b4c2) center / 100% 2px no-repeat;
}
.zoom input::-webkit-slider-thumb {
  appearance: none;
  width: 10px;
  height: 28px;
  background: #fff;
}
.status-bar .command {
  width: 30px;
  margin-left: 46px;
}

/* taskbar */
.taskbar {
  display: flex;
  height: 80px;
  background: #000005;
  color: #fff;
  font-size: 22px;
}
.taskbar > button {
  width: 96px;
  border-bottom: 4px solid transparent;
}
.taskbar > .explorer {
  padding-left: 10px;
}
.taskbar > .running {
  width: 80px;
  margin: 0 8px;
  border-bottom-color: #76b9ed;
}
.taskbar > .focused {
  width: 96px;
  margin: 0 2px 0 8px;
  background: #343538;
}
.word-mark {
  font: bold 20px 'Open Sans', sans-serif;
  fill: #fff;
}
.t-mark {
  font: bold 22px 'Open Sans', sans-serif;
  fill: #d42a1c;
}
.sw-mark {
  font: bold 15px 'Open Sans', sans-serif;
  fill: #fff;
}
.tray {
  display: flex;
  align-items: center;
  margin-left: auto;
}
.tray button, .tray svg {
  width: 32px;
  height: 32px;
}
.tray button {
  margin: 0 8px;
}
.lang, .clock {
  align-self: center;
}
.lang {
  margin-left: 12px;
}
.clock {
  width: 156px;
  padding-bottom: 2px;
  line-height: 36px;
  text-align: center;
}
.taskbar > .notify {
  width: 60px;
  margin-left: -3px;
}
.show-desktop {
  width: 10px;
  margin-left: 26px;
  border-left: 2px solid #555;
}
```
